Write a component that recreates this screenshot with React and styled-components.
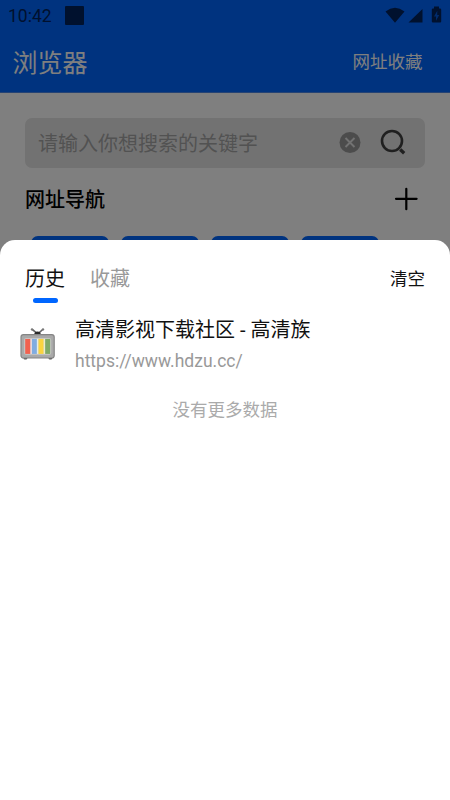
import React from "react";
import styled, { createGlobalStyle } from "styled-components";

const sites = [1, 2, 3, 4];

const history = [
  { title: "高清影视下载社区 - 高清族", url: "https://www.hdzu.cc/" },
];

const StatusIcons = () => (
  <svg width="58" height="20" viewBox="0 0 58 20" fill="#00225c">
    <path d="M0.5 5.4 Q10 -1.8 19.5 5.4 L10 16.8 Z" />
    <path d="M37.5 3 V16.5 H23.5 Z" />
    <path d="M49 0.6 H54 V2.4 H55 Q56.2 2.4 56.2 3.6 V15.5 Q56.2 16.6 55.2 16.6 H48 Q46.8 16.6 46.8 15.5 V3.6 Q46.8 2.4 48 2.4 H49 Z" />
    <path d="M52.3 4.8 L49 10.6 H51 V14.7 L54.2 9 H52.2 Z" fill="#0057d9" />
  </svg>
);

const ClearIcon = () => (
  <svg width="22" height="22" viewBox="0 0 22 22">
    <circle cx="11" cy="10.5" r="10.5" fill="#989898" />
    <path
      d="M6.5 6 L15.5 15 M15.5 6 L6.5 15"
      stroke="#e4e4e4"
      strokeWidth="1.9"
    />
  </svg>
);

const SearchIcon = () => (
  <svg width="28" height="28" viewBox="0 0 28 28" fill="none" stroke="#404040">
    <circle cx="13" cy="12" r="10" strokeWidth="2.6" />
    <path d="M21.2 20.6 L25.2 24.2" strokeWidth="3.4" />
  </svg>
);

const PlusIcon = () => (
  <svg width="24" height="24" viewBox="0 0 24 24" stroke="#000">
    <path
      d="M12.3 1.8 V22.2 M2 11.8 H22.6"
      strokeWidth="2.2"
      strokeLinecap="round"
    />
  </svg>
);

const TvIcon = () => (
  <svg width="36" height="34" viewBox="0 0 36 34">
    <path
      d="M12.3 2.5 L16.5 5.8 M22.7 2.5 L19 5.8"
      stroke="#666"
      strokeWidth="1.6"
    />
    <circle cx="12" cy="2.4" r="1.2" fill="#777" />
    <circle cx="23" cy="2.4" r="1.2" fill="#777" />
    <path d="M14 8 Q14.5 4.6 17.5 4.6 Q20.5 4.6 21 8 Z" fill="#292929" />
    <rect x="3.6" y="29" width="3.6" height="3.5" rx="1.2" fill="#555" />
    <rect x="28.6" y="29" width="3.6" height="3.5" rx="1.2" fill="#555" />
    <rect
      x="1"
      y="7.6"
      width="33.2"
      height="23.4"
      rx="2.5"
      fill="#a9a9a9"
      stroke="#858585"
      strokeWidth="1.2"
    />
    <rect x="4.2" y="11" width="27" height="16.8" rx="2" fill="#c9c9c9" />
    <rect x="5.2" y="11.9" width="5.3" height="15" fill="#f1614f" />
    <rect x="10.5" y="11.9" width="1.4" height="15" fill="#f5dfdd" />
    <rect x="11.9" y="11.9" width="5" height="15" fill="#80ace0" />
    <rect x="16.9" y="11.9" width="1.6" height="15" fill="#e7eee4" />
    <rect x="18.5" y="11.9" width="5.2" height="15" fill="#fad43f" />
    <rect x="23.7" y="11.9" width="1.5" height="15" fill="#ecebcb" />
    <rect x="25.2" y="11.9" width="5" height="15" fill="#7faa67" />
  </svg>
);

const App = () => {
  return (
    <Screen>
      <GlobalStyle />
      <Header>
        <StatusBar>
          <Clock>10:42</Clock>
          <Notification />
          <StatusIcons />
        </StatusBar>
        <TitleBar>
          <Title>浏览器</Title>
          <Bookmarks>网址收藏</Bookmarks>
        </TitleBar>
      </Header>
      <Main>
        <SearchBox>
          <Placeholder>请输入你想搜索的关键字</Placeholder>
          <ClearIcon />
          <SearchIcon />
        </SearchBox>
        <NavHeader>
          <NavTitle>网址导航</NavTitle>
          <PlusIcon />
        </NavHeader>
        <Sites>
          {sites.map((site) => (
            <Site key={site} />
          ))}
        </Sites>
      </Main>
      <Overlay>
        <Sheet>
          <Tabs>
            <Tab $active>历史</Tab>
            <Tab>收藏</Tab>
            <ClearAll>清空</ClearAll>
          </Tabs>
          {history.map((item) => (
            <Item key={item.url}>
              <TvIcon />
              <ItemText>
                <ItemTitle>{item.title}</ItemTitle>
                <ItemUrl>{item.url}</ItemUrl>
              </ItemText>
            </Item>
          ))}
          <Empty>没有更多数据</Empty>
        </Sheet>
      </Overlay>
    </Screen>
  );
};

const GlobalStyle = createGlobalStyle`
  * {
    box-sizing: border-box;
  }
  body {
    margin: 0;
    font-family: Roboto, "Noto Sans CJK SC", sans-serif;
  }
  svg {
    display: block;
    flex-shrink: 0;
  }
`;

const Screen = styled.div`
  position: relative;
  width: 450px;
  height: 800px;
  overflow: hidden;
  background: white;
`;
const Header = styled.header`
  height: 93px;
  background: #0066ff;
  border-bottom: 1px solid #4a86e8;
`;
const StatusBar = styled.div`
  display: flex;
  align-items: center;
  height: 31px;
  padding: 0 7px 0 8px;
  svg {
    margin: 1px 0 0 auto;
  }
`;
const Clock = styled.span`
  width: 57px;
  font-size: 17.5px;
  line-height: 20px;
  color: #00225c;
`;
const Notification = styled.i`
  width: 19px;
  height: 19px;
  border-radius: 1px;
  background: #00225c;
`;
const TitleBar = styled.div`
  display: flex;
  align-items: center;
  justify-content: space-between;
  height: 61px;
  padding: 0 27.5px 0 12.5px;
  color: white;
`;
const Title = styled.h1`
  margin: 0;
  padding-top: 4px;
  font-size: 25px;
  font-weight: 400;
  line-height: 36px;
`;
const Bookmarks = styled.span`
  font-size: 17.5px;
  line-height: 26px;
`;
const Main = styled.main`
  padding: 25px 25px 0;
`;
const SearchBox = styled.div`
  display: flex;
  align-items: center;
  height: 50px;
  padding: 0 18px 0 13px;
  border-radius: 7px;
  background: #e4e4e4;
`;
const Placeholder = styled.span`
  flex: 1;
  padding-top: 2px;
  font-size: 20px;
  line-height: 30px;
  color: #a4a4a4;
  & + svg {
    margin-right: 18px;
  }
`;
const NavHeader = styled.div`
  display: flex;
  align-items: center;
  justify-content: space-between;
  height: 62px;
  padding-right: 7px;
`;
const NavTitle = styled.h2`
  margin: 0;
  padding-top: 2px;
  font-size: 20px;
  font-weight: 500;
  line-height: 30px;
  color: black;
`;
const Sites = styled.div`
  display: flex;
  gap: 12px;
  padding: 6px 6px 0;
`;
const Site = styled.div`
  width: 78px;
  height: 40px;
  border-radius: 7px;
  background: #0066ff;
`;
const Overlay = styled.div`
  position: absolute;
  inset: 0;
  display: flex;
  flex-direction: column;
  justify-content: flex-end;
  background: rgba(0, 0, 0, 0.5);
`;
const Sheet = styled.section`
  height: 560px;
  border-radius: 15px 15px 0 0;
  background: white;
`;
const Tabs = styled.nav`
  display: flex;
  gap: 25px;
  height: 64px;
  padding: 24px 25px 0;
`;
const Tab = styled.div`
  display: flex;
  flex-direction: column;
  align-items: center;
  font-size: 20px;
  line-height: 30px;
  color: ${(props) => (props.$active ? "#111" : "#999")};
  &::after {
    content: "";
    width: 25px;
    height: 5px;
    margin-top: 3.5px;
    border-radius: 3px;
    background: ${(props) => (props.$active ? "#0066ff" : "transparent")};
  }
`;
const ClearAll = styled.span`
  margin-left: auto;
  font-size: 17.5px;
  line-height: 30px;
  color: #111;
`;
const Item = styled.article`
  display: flex;
  align-items: center;
  gap: 19px;
  height: 82px;
  padding-left: 20px;
  & > svg {
    margin-bottom: 2px;
  }
`;
const ItemText = styled.div`
  display: flex;
  flex-direction: column;
`;
const ItemTitle = styled.div`
  font-size: 20px;
  line-height: 32px;
  color: #111;
`;
const ItemUrl = styled.div`
  font-size: 17.5px;
  line-height: 30px;
  color: #999;
`;
const Empty = styled.div`
  font-size: 17.5px;
  line-height: 49px;
  text-align: center;
  color: #aaa;
`;

export default App;
